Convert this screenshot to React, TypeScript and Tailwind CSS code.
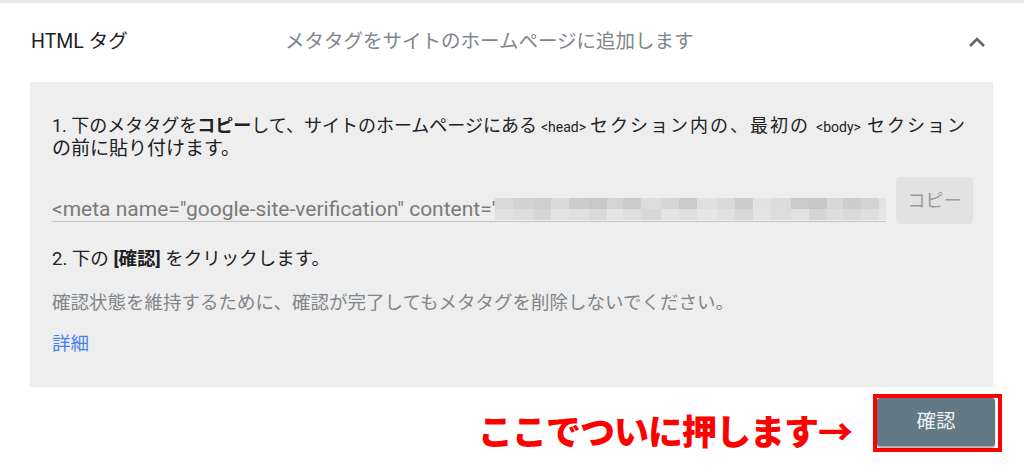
import React from "react";

const FONT = "font-['Roboto','Noto_Sans_CJK_JP',sans-serif]";

const rowA = [
  ["#d9d9d9", 18], ["#d2d2d2", 20], ["#cfcfcf", 18], ["#dadada", 18], ["#cdcdcd", 20],
  ["#c9c9c9", 18], ["#d4d4d4", 16], ["#cccccc", 18], ["#dcdcdc", 20], ["#d6d6d6", 18],
  ["#cbcbcb", 18], ["#e0e0e0", 20], ["#dadada", 18], ["#cdcdcd", 18], ["#e2e2e2", 18],
  ["#dbdbdb", 20], ["#cacaca", 18], ["#c8c8c8", 18], ["#d8d8d8", 16], ["#cdcdcd", 18],
  ["#d3d3d3", 18], ["#e3e3e3", 13],
] as const;
const rowB = [
  ["#e1e1e1", 18], ["#dddddd", 20], ["#d6d6d6", 18], ["#e2e2e2", 18], ["#e0e0e0", 20],
  ["#d9d9d9", 18], ["#e4e4e4", 16], ["#dedede", 18], ["#d7d7d7", 20], ["#e3e3e3", 18],
  ["#dfdfdf", 18], ["#e6e6e6", 20], ["#e1e1e1", 18], ["#d8d8d8", 18], ["#e4e4e4", 18],
  ["#dcdcdc", 20], ["#e2e2e2", 18], ["#d5d5d5", 18], ["#dddddd", 16], ["#d9d9d9", 18],
  ["#dedede", 18], ["#e6e6e6", 13],
] as const;

function Blur() {
  return (
    <div className="flex flex-col flex-1 h-[22px] overflow-hidden">
      <div className="flex h-[11px]">
        {rowA.map(([c, w], i) => (
          <div key={i} className="shrink-0 h-full" style={{ background: c, width: w }} />
        ))}
      </div>
      <div className="flex h-[11px]">
        {rowB.map(([c, w], i) => (
          <div key={i} className="shrink-0 h-full" style={{ background: c, width: w }} />
        ))}
      </div>
    </div>
  );
}

export default function App() {
  return (
    <div className={`w-[1024px] h-[469px] bg-white overflow-hidden ${FONT}`}>
      <div className="h-[3px] bg-[#e8eaed]" />
      {/* header */}
      <div className="flex items-center h-[78px] pl-[31px] pr-[38px]">
        <div className="w-[254px] text-[19.5px] text-[#202124]">HTML タグ</div>
        <div className="text-[19.5px] text-[#80868b]">
          メタタグをサイトのホームページに追加します
        </div>
        <svg className="ml-auto" width="18" height="12" viewBox="0 0 18 12">
          <path d="M2 10 L9 3 L16 10" fill="none" stroke="#5f6368" strokeWidth="2.6" />
        </svg>
      </div>
      {/* panel */}
      <div className="ml-[30px] w-[963px] h-[305px] bg-[#eeeeee] pt-[33px] pl-[22px] pr-[20px] mt-[1px]">
        <div className="text-[18px] leading-[22px] text-[#202124] whitespace-nowrap">
          <div>
            1. 下のメタタグを<b className="font-bold">コピー</b>して、サイトのホームページにある
            <span className="text-[14px] mx-[4px]">&lt;head&gt;</span>
            <span className="tracking-[2px]">セクション内の、最初の</span>
            <span className="text-[14px] mx-[6px]">&lt;body&gt;</span>
            <span className="tracking-[2px]">セクション</span>
          </div>
          <div className="text-[19px]">の前に貼り付けます。</div>
        </div>
        <div className="flex items-end mt-[17px] h-[47px]">
          <div className="flex items-center w-[834px] h-[25px] border-b border-[#c6c6c6] mb-[2px]">
            <span className="text-[21px] text-[#7a7a7a] whitespace-nowrap leading-[24px]">
              &lt;meta name="google-site-verification" content='
            </span>
            <Blur />
          </div>
          <div className="ml-[10px] w-[77px] h-[47px] rounded-[4px] bg-[#e2e2e2] flex items-center justify-center text-[18px] text-[#9a9a9a]">
            コピー
          </div>
        </div>
        <div className="mt-[23px] text-[18.5px] leading-[24px] text-[#202124]">
          2. 下の <b className="font-bold">[確認]</b> をクリックします。
        </div>
        <div className="mt-[20px] text-[18.5px] leading-[24px] text-[#80868b]">
          確認状態を維持するために、確認が完了してもメタタグを削除しないでください。
        </div>
        <div className="mt-[17px] text-[18.5px] leading-[24px] text-[#4a7ff2]">詳細</div>
      </div>
      {/* bottom */}
      <div className="flex justify-end items-start mt-[7px] pr-[22px]">
        <div className="mt-[18px] mr-[21px] text-[35px] leading-[36px] font-black text-[#ff0000] tracking-[-1px] font-['Noto_Sans_CJK_JP',sans-serif]">
          ここでついに押します→
        </div>
        <div className="w-[129px] h-[58px] border-[4px] border-[#ff0000] flex items-start p-0">
          <div className="w-[118px] h-[48px] rounded-[3px] bg-[#627885] shadow-[0_2px_2px_rgba(0,0,0,0.35)] flex items-center justify-center text-[19.5px] text-[#eef1f3]">
            確認
          </div>
        </div>
      </div>
    </div>
  );
}
